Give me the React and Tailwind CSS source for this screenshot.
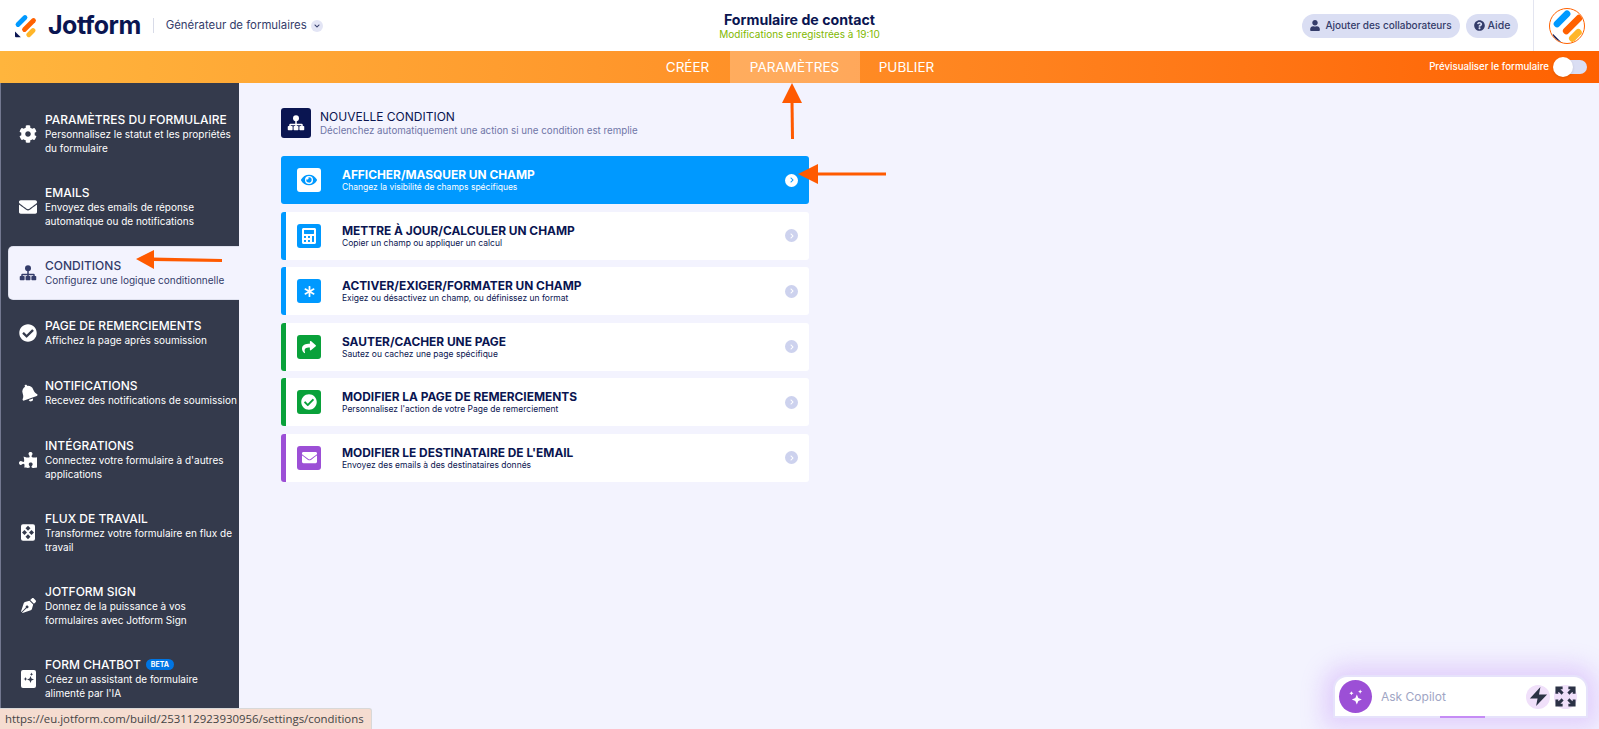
import { FaCog, FaEnvelope, FaCheckCircle, FaBell, FaPuzzlePiece, FaEye, FaCalculator, FaAsterisk, FaShare, FaUser, FaQuestionCircle, FaPenNib, FaChevronDown, FaChevronRight } from "react-icons/fa";

const sans = "font-['Inter',sans-serif]";

function Logo({ className }) {
  return (
    <svg viewBox="0 0 24 24" fill="none" strokeLinecap="round" strokeWidth="4.8" className={className}>
      <path d="M12 3.500L5 10.500" stroke="#0099ff" />
      <path d="M20.500 6.500L11.500 15.500" stroke="#ff6100" />
      <path d="M20 16.500L15.800 20.700" stroke="#ffb629" />
      <path d="M2 17.500l5.800 5.800H3a1 1 0 0 1-1-1z" fill="#0a1551" />
    </svg>
  );
}

function Sitemap({ className }) {
  return (
    <svg viewBox="0 0 24 24" fill="currentColor" className={className}>
      <circle cx="12" cy="5.500" r="4" />
      <path d="M11 9h2v4h6.500a1.500 1.500 0 0 1 1.500 1.500V16h-2v-1h-6v1h-2v-1H5v1H3v-1.500A1.500 1.500 0 0 1 4.500 13H11z" />
      <rect x="1" y="16" width="6.500" height="5.500" rx="1" />
      <rect x="8.750" y="16" width="6.500" height="5.500" rx="1" />
      <rect x="16.500" y="16" width="6.500" height="5.500" rx="1" />
    </svg>
  );
}

function FlowIcon({ className }) {
  return (
    <svg viewBox="0 0 14 16.500" className={className}>
      <rect width="14" height="16.500" rx="2" fill="#fff" />
      <g fill="#343a4c">
        <rect x="5.250" y="2.250" width="3.500" height="3.500" transform="rotate(45 7 4)" />
        <rect x="1.750" y="6.500" width="3.500" height="3.500" transform="rotate(45 3.500 8.250)" />
        <rect x="8.750" y="6.500" width="3.500" height="3.500" transform="rotate(45 10.500 8.250)" />
        <rect x="5.250" y="10.750" width="3.500" height="3.500" transform="rotate(45 7 12.500)" />
      </g>
    </svg>
  );
}

function ChatbotIcon({ className }) {
  return (
    <svg viewBox="0 0 15 18" className={className}>
      <rect width="15" height="18" rx="2" fill="#fff" />
      <path d="M9.500 6l1 2.500 2.500 1-2.500 1-1 2.500-1-2.500-2.500-1 2.500-1z" fill="#343a4c" />
      <path d="M4.500 7l.6 1.400 1.400.6-1.400.6-.6 1.400-.6-1.400L2.500 9l1.400-.6z" fill="#343a4c" />
      <path d="M10.500 2.500l.5 1.200 1.200.5-1.200.5-.5 1.200-.5-1.200-1.200-.5 1.200-.5z" fill="#343a4c" />
    </svg>
  );
}

function Sparkles({ className }) {
  return (
    <svg viewBox="0 0 24 24" fill="#fff" className={className}>
      <path d="M13 9l1.800 4.200L19 15l-4.200 1.800L13 21l-1.800-4.200L7 15l4.200-1.800z" />
      <path d="M6.500 5l.8 1.700L9 7.500l-1.700.8-.8 1.700-.8-1.700L4 7.500l1.700-.8z" />
      <path d="M17 3l.8 1.700 1.700.8-1.700.8L17 8l-.8-1.700-1.700-.8 1.700-.8z" />
    </svg>
  );
}

function BoltIcon({ className }) {
  return (
    <svg viewBox="0 0 24 24" fill="#2b3245" className={className}>
      <path d="M14 2L3 14h8l-1.500 8L21 10h-8.500z" />
    </svg>
  );
}

function ExpandIcon({ className }) {
  return (
    <svg viewBox="0 0 24 24" fill="none" stroke="#2b3245" strokeWidth="3" className={className}>
      <path d="M3 9V3h6M3 3l6 6M15 3h6v6M21 3l-6 6M3 15v6h6M3 21l6-6M21 15v6h-6M21 21l-6-6" />
    </svg>
  );
}

const sideItems = [
  { title: "PARAMÈTRES DU FORMULAIRE", desc: "Personnalisez le statut et les propriétés du formulaire", icon: <FaCog className="w-[18px] h-[18px]" /> },
  { title: "EMAILS", desc: "Envoyez des emails de réponse automatique ou de notifications", icon: <FaEnvelope className="w-[18px] h-[18px]" /> },
  { title: "CONDITIONS", desc: "Configurez une logique conditionnelle", icon: <Sitemap className="w-[18px] h-[18px]" />, active: true },
  { title: "PAGE DE REMERCIEMENTS", desc: "Affichez la page après soumission", icon: <FaCheckCircle className="w-[18px] h-[18px]" /> },
  { title: "NOTIFICATIONS", desc: "Recevez des notifications de soumission", icon: <FaBell className="w-[17px] h-[18px] -rotate-[20deg]" /> },
  { title: "INTÉGRATIONS", desc: "Connectez votre formulaire à d'autres applications", icon: <FaPuzzlePiece className="w-[18px] h-[18px] -scale-x-100" /> },
  { title: "FLUX DE TRAVAIL", desc: "Transformez votre formulaire en flux de travail", icon: <FlowIcon className="w-[14px] h-[17px]" /> },
  { title: "JOTFORM SIGN", desc: "Donnez de la puissance à vos formulaires avec Jotform Sign", icon: <FaPenNib className="w-[15px] h-[15px]" /> },
  { title: "FORM CHATBOT", desc: "Créez un assistant de formulaire alimenté par l'IA", icon: <ChatbotIcon className="w-[15px] h-[18px]" />, beta: true },
];

const cards = [
  { title: "AFFICHER/MASQUER UN CHAMP", desc: "Changez la visibilité de champs spécifiques", border: "border-[#0099ff]", box: "bg-[#0099ff]", icon: <FaEye className="w-[16px] h-[16px]" />, active: true },
  { title: "METTRE À JOUR/CALCULER UN CHAMP", desc: "Copier un champ ou appliquer un calcul", border: "border-[#0099ff]", box: "bg-[#0099ff]", icon: <FaCalculator className="w-[14px] h-[16px]" /> },
  { title: "ACTIVER/EXIGER/FORMATER UN CHAMP", desc: "Exigez ou désactivez un champ, ou définissez un format", border: "border-[#0099ff]", box: "bg-[#0099ff]", icon: <FaAsterisk className="w-[11px] h-[11px]" /> },
  { title: "SAUTER/CACHER UNE PAGE", desc: "Sautez ou cachez une page spécifique", border: "border-[#09a13a]", box: "bg-[#09a13a]", icon: <FaShare className="w-[16px] h-[14px]" /> },
  { title: "MODIFIER LA PAGE DE REMERCIEMENTS", desc: "Personnalisez l'action de votre Page de remerciement", border: "border-[#09a13a]", box: "bg-[#09a13a]", icon: <FaCheckCircle className="w-[16px] h-[16px]" /> },
  { title: "MODIFIER LE DESTINATAIRE DE L'EMAIL", desc: "Envoyez des emails à des destinataires donnés", border: "border-[#9c4fd6]", box: "bg-[#9c4fd6]", icon: <FaEnvelope className="w-[17px] h-[15px]" /> },
];

function Header() {
  return (
    <header className="h-[51px] bg-white flex items-center">
      <div className="flex-1 flex items-center">
        <Logo className="ml-[13px] w-[24px] h-[24px]" />
        <span className={`ml-[11px] text-[#0a1551] text-[25px] font-bold tracking-[-0.5px] ${sans}`}>Jotform</span>
        <span className="ml-[12px] w-px h-[15px] bg-[#d8dbe8]" />
        <span className={`ml-[12px] text-[#343c6a] text-[11.400px] ${sans}`}>Générateur de formulaires</span>
        <span className="ml-[4px] w-[12px] h-[12px] rounded-full bg-[#e3e5f5] flex items-center justify-center text-[#343c6a]">
          <FaChevronDown className="w-[6px] h-[6px]" />
        </span>
      </div>
      <div className="text-center">
        <div className={`text-[#0a1551] text-[14.200px] leading-[17px] font-bold ${sans}`}>Formulaire de contact</div>
        <div className={`text-[#7fb800] text-[10px] leading-[13px] ${sans}`}>Modifications enregistrées à 19:10</div>
      </div>
      <div className="flex-1 flex items-center justify-end h-full">
        <button className={`h-[24px] w-[158px] rounded-full bg-[#dadef3] flex items-center justify-center gap-[5px] text-[#343c6a] text-[10px] font-medium ${sans}`}>
          <FaUser className="w-[10px] h-[11px]" />
          Ajouter des collaborateurs
        </button>
        <button className={`ml-[6px] h-[24px] w-[52px] rounded-full bg-[#dadef3] flex items-center justify-center gap-[3px] text-[#343c6a] text-[10.500px] font-medium ${sans}`}>
          <FaQuestionCircle className="w-[11px] h-[11px]" />
          Aide
        </button>
        <div className="ml-[15px] h-full w-px bg-[#e3e5f0]" />
        <div className="ml-[15px] mr-[14px] w-[36px] h-[36px] rounded-full border border-[#ff6100] overflow-hidden flex items-center justify-center">
          <Logo className="w-[34px] h-[34px]" />
        </div>
      </div>
    </header>
  );
}

function NavBar() {
  return (
    <nav className="h-[32px] bg-gradient-to-r from-[#ffb53d] to-[#ff6100] flex items-stretch">
      <div className="flex-1" />
      <div className={`flex items-stretch text-white text-[13.500px] ${sans}`}>
        <span className="w-[84px] flex items-center justify-center">CRÉER</span>
        <span className="w-[130px] flex items-center justify-center bg-white/25">PARAMÈTRES</span>
        <span className="w-[94px] flex items-center justify-center">PUBLIER</span>
      </div>
      <div className={`flex-1 flex items-center justify-end text-white text-[9.700px] font-medium ${sans}`}>
        Prévisualiser le formulaire
        <span className="relative ml-[5px] mr-[12px] w-[33px] h-[14px] rounded-full bg-[#dadef3]">
          <span className="absolute -left-px -top-[3px] w-[20px] h-[20px] rounded-full bg-white shadow" />
        </span>
      </div>
    </nav>
  );
}

function Sidebar() {
  return (
    <aside className={`w-[239px] h-[646px] overflow-hidden shrink-0 bg-[#343a4c] border-l border-[#737890] pt-[14px] pl-[8px] ${sans}`}>
      {sideItems.map((item) => (
        <div key={item.title} className="py-[4px]">
          <div className={`min-h-[52px] flex items-center pl-[10px] py-[10.500px] ${item.active ? "bg-[#f3f3fe] rounded-l-[4px] text-[#343c6a] shadow-[0_0_0_1px_#dfe1ee]" : "text-white"}`}>
            <span className="w-[18px] h-[20px] flex items-center justify-center">{item.icon}</span>
            <div className="ml-[8px] flex-1">
              <div className="flex items-center text-[12px] leading-[15px] font-medium">
                {item.title}
                {item.beta && <span className="ml-[5px] px-[5px] h-[11px] flex items-center rounded-full bg-[#0075e3] text-[7px] font-bold text-white">BETA</span>}
              </div>
              <p className="text-[10px] leading-[14.500px]">{item.desc}</p>
            </div>
          </div>
        </div>
      ))}
    </aside>
  );
}

function Card({ card }) {
  return (
    <div className={`h-[48px] rounded-[3px] flex items-center border-l-[5px] pl-[11px] pr-[11px] ${card.border} ${card.active ? "bg-[#0099ff] text-white" : "bg-white text-[#0a1551]"} ${sans}`}>
      <span className={`w-[24px] h-[24px] rounded-[3px] flex items-center justify-center ${card.active ? "bg-white text-[#0099ff]" : `${card.box} text-white`}`}>
        {card.icon}
      </span>
      <div className="ml-[21px] flex-1">
        <div className="text-[11.900px] leading-[15px] font-bold">{card.title}</div>
        <div className="text-[8.500px] leading-[11px]">{card.desc}</div>
      </div>
      <span className={`w-[13px] h-[13px] rounded-full flex items-center justify-center ${card.active ? "bg-white text-[#0099ff]" : "bg-[#cdd2ee] text-white"}`}>
        <FaChevronRight className="w-[6px] h-[6px]" />
      </span>
    </div>
  );
}

function Arrows() {
  return (
    <>
      <svg className="absolute left-[780px] top-[83px] w-[24px] h-[56px]" viewBox="0 0 24 56">
        <path d="M10.500 18h3l.5 38h-3z" fill="#ff5a00" />
        <path d="M12 0l10 20H2z" fill="#ff5a00" />
      </svg>
      <svg className="absolute left-[798px] top-[163px] w-[90px] h-[24px]" viewBox="0 0 90 24">
        <path d="M18 9.500h70v3H18z" fill="#ff5a00" />
        <path d="M0 11l20-10v20z" fill="#ff5a00" />
      </svg>
      <svg className="absolute left-[134px] top-[248px] w-[90px] h-[24px]" viewBox="0 0 90 24">
        <path d="M18 9.500l70 1.500v3l-70-1z" fill="#ff5a00" />
        <path d="M2 11l18-9v19z" fill="#ff5a00" />
      </svg>
    </>
  );
}

function Copilot() {
  return (
    <div className={`absolute left-[1333px] top-[675px] w-[255px] h-[43px] rounded-[14px] rounded-b-none bg-white border-2 border-[#e6e2fb] shadow-[0_0_22px_10px_rgba(190,130,250,0.3)] flex items-center pl-[4px] pr-[9px] ${sans}`}>
      <span className="w-[33px] h-[33px] rounded-full bg-[#9c4fd6] flex items-center justify-center">
        <Sparkles className="w-[20px] h-[20px]" />
      </span>
      <span className="ml-[9px] flex-1 text-[12px] text-[#a0a5c4]">Ask Copilot</span>
      <span className="w-[24px] h-[24px] rounded-full bg-[#f0e0fa] flex items-center justify-center">
        <BoltIcon className="w-[23px] h-[23px]" />
      </span>
      <span className="ml-[4px] w-[23px] h-[24px] rounded-full bg-[#f0e0fa] flex items-center justify-center">
        <ExpandIcon className="w-[23px] h-[23px]" />
      </span>
      <span className="absolute left-[105px] -bottom-[2px] w-[45px] h-[2px] bg-[#c58cf5]" />
    </div>
  );
}

export default function App() {
  return (
    <div className="relative w-[1599px] h-[729px] overflow-hidden bg-[#f3f3fe]">
      <Header />
      <NavBar />
      <div className="flex">
        <Sidebar />
        <main className={`pl-[42px] pt-[25px] w-[570px] ${sans}`}>
          <div className="flex items-center">
            <span className="w-[30px] h-[30px] rounded-[3px] bg-[#0a1551] flex items-center justify-center text-white">
              <Sitemap className="w-[18px] h-[18px]" />
            </span>
            <div className="ml-[9px]">
              <div className="text-[#0a1551] text-[12px] leading-[15px]">NOUVELLE CONDITION</div>
              <div className="text-[#6f76a7] text-[9.750px] leading-[14px]">Déclenchez automatiquement une action si une condition est remplie</div>
            </div>
          </div>
          <div className="mt-[18px] flex flex-col gap-[7.500px]">
            {cards.map((card) => <Card key={card.title} card={card} />)}
          </div>
        </main>
      </div>
      <Arrows />
      <Copilot />
      <div className="absolute left-0 bottom-0 h-[21px] pl-[5px] pr-[7px] flex items-center bg-[#f5dcd0] border-t border-r border-[#d8d8d8] rounded-tr-[3px] text-[#444] text-[11.400px] font-['Open_Sans',sans-serif]">
        https://eu.jotform.com/build/253112923930956/settings/conditions
      </div>
    </div>
  );
}
